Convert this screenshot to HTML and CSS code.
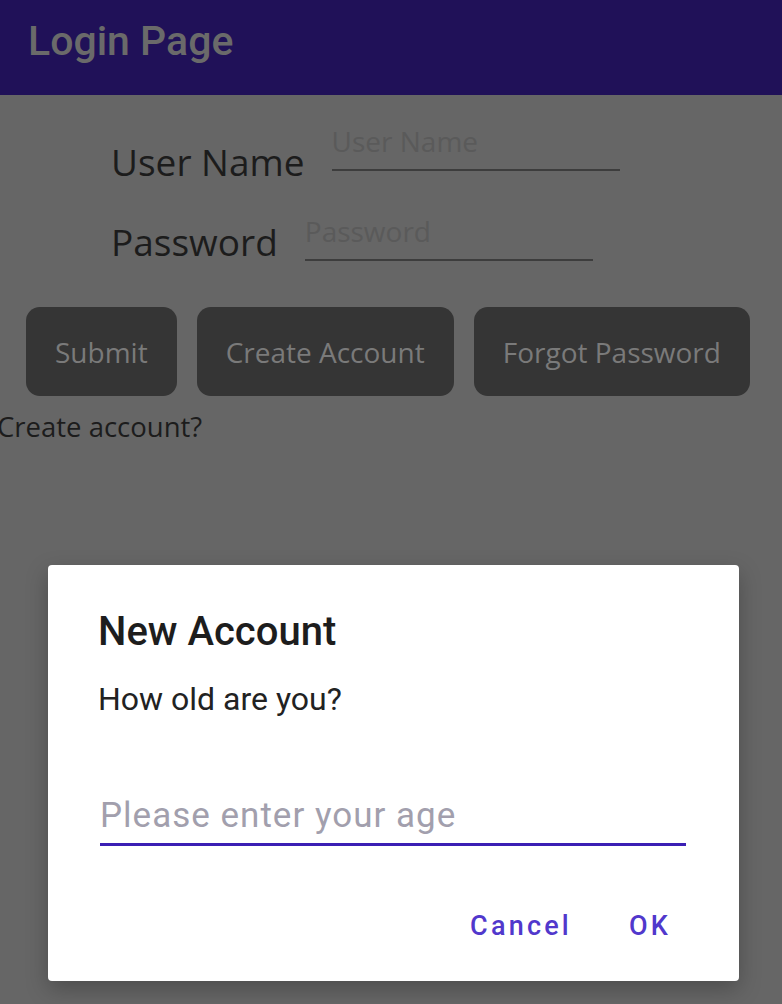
FILE: index.html
```html
<!DOCTYPE html>
<html>
<head>
<meta charset="utf-8">
<link rel="stylesheet" href="styles.css">
</head>
<body>
<div class="page">
  <header class="topbar"><h1 class="title">Login Page</h1></header>
  <main class="content">
    <div class="field-row row-user">
      <span class="label label-user">User Name</span>
      <div class="entry"><span class="placeholder">User Name</span></div>
    </div>
    <div class="field-row row-pass">
      <span class="label label-pass">Password</span>
      <div class="entry"><span class="placeholder">Password</span></div>
    </div>
    <div class="buttons">
      <button class="btn">Submit</button>
      <button class="btn">Create Account</button>
      <button class="btn">Forgot Password</button>
    </div>
    <p class="create-link">Create account?</p>
  </main>
  <div class="dialog">
    <h2 class="dialog-title">New Account</h2>
    <p class="dialog-msg">How old are you?</p>
    <div class="dialog-input"><span class="dialog-placeholder">Please enter your age</span></div>
    <div class="dialog-actions">
      <span class="action">Cancel</span>
      <span class="action">OK</span>
    </div>
  </div>
</div>
</body>
</html>
```
FILE: styles.css
```css
html, body {
  margin: 0;
  padding: 0;
  background: #666666;
}
.page {
  position: relative;
  width: 782px;
  height: 1004px;
  overflow: hidden;
  background: #666666;
}
.topbar {
  height: 95px;
  background: #201158;
  padding: 17px 28px 0;
  box-sizing: border-box;
}
.title {
  margin: 0;
  font-family: Roboto, "Liberation Sans", sans-serif;
  font-weight: 500;
  font-size: 41px;
  line-height: 48px;
  color: #6a6a6a;
}
.content {
  font-family: "Open Sans", "Liberation Sans", sans-serif;
}
.field-row {
  display: flex;
  align-items: flex-start;
  padding-left: 111px;
}
.row-user {
  margin-top: 27px;
  height: 65px;
  gap: 27px;
}
.row-pass {
  margin-top: 25px;
  height: 55px;
  gap: 27px;
}
.label {
  font-size: 37px;
  line-height: 50px;
  color: #1c1c1c;
}
.label-user {
  margin-top: 15px;
}
.label-pass {
  margin-top: 5px;
}
.entry {
  width: 288px;
  padding-bottom: 9px;
  border-bottom: 2px solid #3d3d3d;
}
.placeholder {
  display: block;
  font-size: 28px;
  line-height: 38px;
  color: #5a5a5a;
}
.buttons {
  display: flex;
  gap: 20px;
  padding-left: 26px;
  margin-top: 40px;
}
.btn {
  height: 89px;
  border: none;
  border-radius: 14px;
  background: #353535;
  color: #7a7a7a;
  font-family: "Open Sans", "Liberation Sans", sans-serif;
  font-size: 28px;
  padding: 0 29px;
}
.create-link {
  margin: 12px 0 0 -3px;
  font-size: 27.5px;
  line-height: 38px;
  color: #1c1c1c;
}
.dialog {
  position: absolute;
  left: 48px;
  top: 565px;
  width: 691px;
  height: 416px;
  background: #ffffff;
  border-radius: 4px;
  box-shadow: 0 8px 22px rgba(0, 0, 0, 0.25);
  font-family: Roboto, "Liberation Sans", sans-serif;
  box-sizing: border-box;
  padding: 43px 53px 0 50px;
}
.dialog-title {
  margin: 0;
  font-size: 40px;
  font-weight: 500;
  line-height: 48px;
  color: #1d1d1d;
}
.dialog-msg {
  margin: 23px 0 0;
  font-size: 32px;
  line-height: 40px;
  color: #222222;
}
.dialog-input {
  margin: 77px 0 0 2px;
  padding-bottom: 7px;
  border-bottom: 3px solid #3b1fb4;
}
.dialog-placeholder {
  display: block;
  font-size: 35px;
  line-height: 40px;
  letter-spacing: 1px;
  color: #a29fad;
}
.dialog-actions {
  display: flex;
  justify-content: flex-end;
  gap: 57px;
  margin-top: 64px;
  padding-right: 15px;
}
.action {
  font-size: 27px;
  font-weight: 500;
  line-height: 32px;
  letter-spacing: 3.2px;
  color: #5138cc;
}
```
